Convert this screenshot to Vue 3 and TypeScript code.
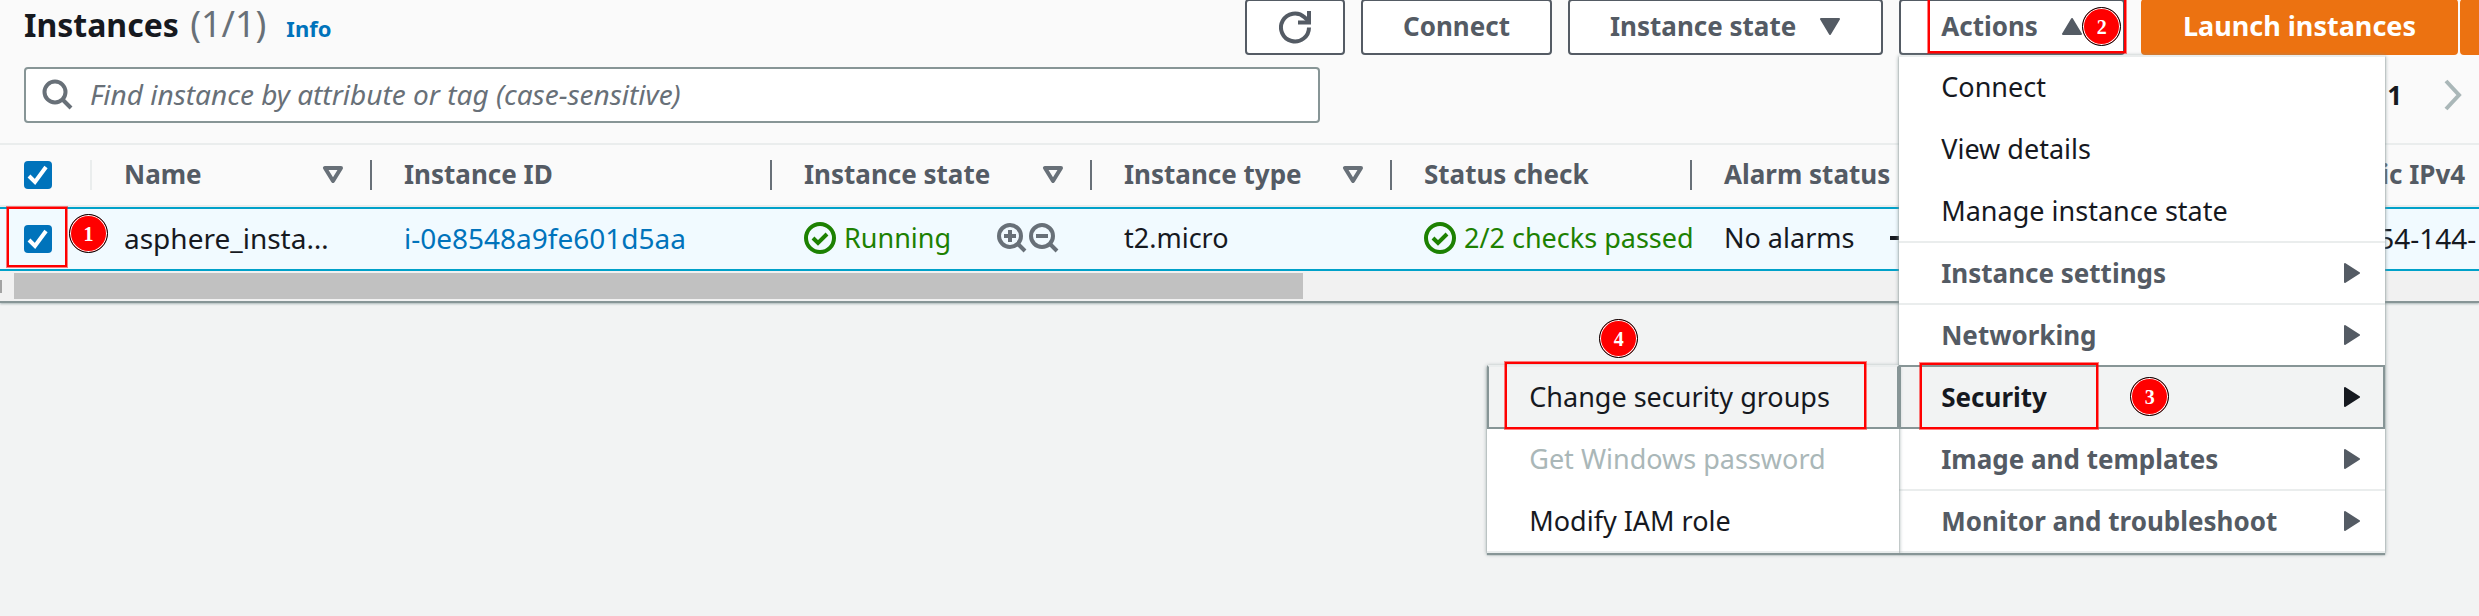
<script setup lang="ts">
import { ref } from 'vue'

interface Column {
  id: string
  label: string
  sortable: boolean
}

interface MenuEntry {
  label: string
  group: boolean
  active?: boolean
}

interface SubEntry {
  label: string
  active?: boolean
  disabled?: boolean
}

const columns: Column[] = [
  { id: 'name', label: 'Name', sortable: true },
  { id: 'iid', label: 'Instance ID', sortable: false },
  { id: 'state', label: 'Instance state', sortable: true },
  { id: 'type', label: 'Instance type', sortable: true },
  { id: 'check', label: 'Status check', sortable: false },
  { id: 'alarm', label: 'Alarm status', sortable: false },
  { id: 'zone', label: '', sortable: false },
  { id: 'dns', label: 'Public IPv4', sortable: false },
]

const menu: MenuEntry[] = [
  { label: 'Connect', group: false },
  { label: 'View details', group: false },
  { label: 'Manage instance state', group: false },
  { label: 'Instance settings', group: true },
  { label: 'Networking', group: true },
  { label: 'Security', group: true, active: true },
  { label: 'Image and templates', group: true },
  { label: 'Monitor and troubleshoot', group: true },
]

const securityMenu: SubEntry[] = [
  { label: 'Change security groups', active: true },
  { label: 'Get Windows password', disabled: true },
  { label: 'Modify IAM role' },
]

const query = ref('')
const allSelected = ref(true)
const rowSelected = ref(true)
</script>

<template>
  <main class="page">
    <section class="panel">
      <header class="toolbar">
        <h1 class="title">Instances <span class="count">(1/1)</span></h1>
        <a class="info" href="#info">Info</a>
        <div class="actions">
          <button class="btn btn-icon" type="button" aria-label="Refresh">
            <svg width="32" height="34" viewBox="0 0 32 34" fill="none" stroke="currentColor" stroke-width="4">
              <path d="M30 17.500A14 14 0 1 1 25.500 7.200L30 11.500" />
              <path d="M30 1V12.500H19" />
            </svg>
          </button>
          <button class="btn" type="button">Connect</button>
          <button class="btn" type="button">
            Instance state
            <svg class="caret" width="22" height="17" viewBox="0 0 22 17"><path d="M2 1H20L11 16Z" /></svg>
          </button>
          <div class="dropdown">
            <button class="btn" type="button" aria-haspopup="menu" aria-expanded="true">
              Actions
              <svg class="caret" width="22" height="17" viewBox="0 0 22 17"><path d="M2 16H20L11 1Z" /></svg>
            </button>
            <span class="frame frame-actions"></span>
            <span class="badge badge-2">2</span>
            <ul class="menu">
              <li v-for="m in menu" :key="m.label" :class="{ group: m.group, active: m.active }">
                <button class="item" type="button">
                  {{ m.label }}
                  <svg v-if="m.group" class="arrow" width="18" height="20" viewBox="0 0 18 20">
                    <path d="M2 1L16 10L2 19Z" />
                  </svg>
                </button>
                <template v-if="m.active">
                  <span class="frame frame-security"></span>
                  <span class="badge badge-3">3</span>
                  <ul class="menu submenu">
                    <li v-for="s in securityMenu" :key="s.label" :class="{ active: s.active }">
                      <button class="item" type="button" :disabled="s.disabled">{{ s.label }}</button>
                      <template v-if="s.active">
                        <span class="frame frame-groups"></span>
                        <span class="badge badge-4">4</span>
                      </template>
                    </li>
                  </ul>
                </template>
              </li>
            </ul>
          </div>
          <div class="split">
            <button class="btn btn-primary" type="button">Launch instances</button>
            <button class="btn btn-primary btn-more" type="button" aria-label="More launch options"></button>
          </div>
        </div>
      </header>

      <div class="filters">
        <label class="search">
          <svg width="32" height="32" viewBox="0 0 32 32" fill="none" stroke="currentColor" stroke-width="4">
            <circle cx="13" cy="13" r="10.500" />
            <path d="M20 20L29 29" />
          </svg>
          <input
            v-model="query"
            type="text"
            aria-label="Find instance"
            placeholder="Find instance by attribute or tag (case-sensitive)"
          />
        </label>
        <nav class="pager" aria-label="Pages">
          <button class="page-no" type="button">1</button>
          <button class="page-next" type="button" aria-label="Next page">
            <svg width="20" height="32" viewBox="0 0 20 32" fill="none" stroke="currentColor" stroke-width="4">
              <path d="M3 2L16 16L3 30" />
            </svg>
          </button>
        </nav>
      </div>

      <div class="table-wrap">
        <table>
          <colgroup>
            <col class="c-check" /><col class="c-name" /><col class="c-id" /><col class="c-state" />
            <col class="c-std" /><col class="c-std" /><col class="c-std" /><col class="c-std" /><col />
          </colgroup>
          <thead>
            <tr>
              <th class="pick">
                <label class="tick">
                  <input v-model="allSelected" type="checkbox" aria-label="Select all instances" />
                  <svg viewBox="0 0 28 28"><path d="M5 15L11 21L22 6" /></svg>
                </label>
              </th>
              <th v-for="c in columns" :key="c.id">
                <div class="head">
                  {{ c.label }}
                  <svg v-if="c.sortable" class="sort" width="22" height="17" viewBox="0 0 22 17">
                    <path d="M3 2H19L11 15Z" />
                  </svg>
                </div>
              </th>
            </tr>
          </thead>
          <tbody>
            <tr>
              <td class="pick">
                <label class="tick">
                  <input v-model="rowSelected" type="checkbox" aria-label="Select asphere instance" />
                  <svg viewBox="0 0 28 28"><path d="M5 15L11 21L22 6" /></svg>
                </label>
                <span class="frame frame-row"></span>
                <span class="badge badge-1">1</span>
              </td>
              <td class="wide">asphere_insta…</td>
              <td class="wide"><a href="#instance">i-0e8548a9fe601d5aa</a></td>
              <td>
                <div class="status">
                  <svg class="ok" width="32" height="32" viewBox="0 0 32 32">
                    <circle cx="16" cy="16" r="14" /><path d="M9 16L14 21L23 12" />
                  </svg>
                  <span>Running</span>
                  <span class="lenses">
                    <button type="button" aria-label="Include in filter">
                      <svg width="30" height="30" viewBox="0 0 30 30">
                        <circle cx="13" cy="13" r="11" /><path d="M21 21L28 28M13 7V19M7 13H19" />
                      </svg>
                    </button>
                    <button type="button" aria-label="Exclude from filter">
                      <svg width="30" height="30" viewBox="0 0 30 30">
                        <circle cx="13" cy="13" r="11" /><path d="M21 21L28 28M7 13H19" />
                      </svg>
                    </button>
                  </span>
                </div>
              </td>
              <td>t2.micro</td>
              <td>
                <div class="status">
                  <svg class="ok" width="32" height="32" viewBox="0 0 32 32">
                    <circle cx="16" cy="16" r="14" /><path d="M9 16L14 21L23 12" />
                  </svg>
                  <span>2/2 checks passed</span>
                </div>
              </td>
              <td>
                <div class="alarm">
                  No alarms
                  <button type="button" aria-label="Add alarm">
                    <svg width="28" height="28" viewBox="0 0 28 28"><path d="M0 14H28M14 0V28" /></svg>
                  </button>
                </div>
              </td>
              <td></td>
              <td class="wide">ec2-54-144-</td>
            </tr>
          </tbody>
        </table>
      </div>
      <div class="scrollbar">
        <span class="nub"></span>
        <span class="thumb"></span>
      </div>
    </section>
  </main>
</template>

<style>
body {
  background: #f2f3f3;
  overflow: hidden;
}
</style>

<style scoped>
.page {
  min-height: 100vh;
  overflow: hidden;
  color: #16191f;
  font: 27px/36px "Noto Sans", "Open Sans", sans-serif;
}
.page *,
.page *::before,
.page *::after {
  box-sizing: border-box;
}
button,
input {
  margin: 0;
  padding: 0;
  border: 0;
  background: none;
  color: inherit;
  font: inherit;
}
svg {
  display: block;
  flex: none;
}
a {
  color: #0073bb;
  text-decoration: none;
}
.panel {
  background: #fafafa;
  border-bottom: 2px solid #879596;
  box-shadow: 0 1px 2px #aab7b8;
}

/* toolbar */
.toolbar {
  display: flex;
  align-items: flex-start;
  height: 55px;
  padding-left: 24px;
}
.title {
  margin: 0;
  font-size: 32px;
  line-height: 48px;
  font-weight: 700;
}
.count {
  margin-left: 3px;
  color: #687078;
  font-size: 36px;
  font-weight: 400;
}
.info {
  margin-left: 20px;
  font-size: 22px;
  line-height: 56px;
  font-weight: 700;
}
.actions {
  display: flex;
  gap: 16px;
  margin: -1px -36px 0 auto;
}
.btn {
  display: flex;
  align-items: center;
  gap: 23px;
  height: 56px;
  padding: 0 40px 2px;
  border: 2px solid #545b64;
  border-radius: 4px;
  background: #fff;
  color: #545b64;
  font-size: 26px;
  font-weight: 700;
  white-space: nowrap;
}
.btn-icon {
  padding: 0 32px;
}
.caret,
.arrow {
  fill: currentColor;
  stroke: currentColor;
  stroke-width: 2;
  stroke-linejoin: round;
}
.split {
  display: flex;
  gap: 2px;
}
.btn-primary {
  border-color: #ec7211;
  background: #ec7211;
  color: #fff;
  font-size: 27px;
}
.btn-more {
  width: 55px;
  padding: 0;
}

/* actions menu */
.dropdown {
  position: relative;
}
.menu {
  position: absolute;
  z-index: 5;
  top: 100%;
  left: 0;
  width: 486px;
  margin: 0;
  padding: 0;
  list-style: none;
  background: #fff;
  border-bottom: 2px solid #eaeded;
  box-shadow: 0 2px 1px #879596, 0 1px 4px #879596;
}
.menu li {
  position: relative;
  height: 62px;
}
.item {
  display: flex;
  align-items: center;
  justify-content: space-between;
  width: 100%;
  height: 62px;
  padding: 0 24px 0 42px;
  border-top: 2px solid transparent;
  text-align: left;
  white-space: nowrap;
}
.item:disabled {
  color: #aab7b8;
}
.menu > li:first-child > .item {
  border-top-color: #eaeded;
}
.group > .item {
  border-top-color: #eaeded;
  color: #545b64;
  font-size: 26px;
  font-weight: 700;
}
.menu > .active > .item {
  height: 64px;
  border: 2px solid #879596;
  padding-right: 22px;
  padding-left: 40px;
  background: #f2f3f3;
  color: #16191f;
}
.active + .group > .item {
  border-top-color: transparent;
}
.submenu {
  top: 0;
  right: 100%;
  left: auto;
  width: 412px;
}

/* filter row */
.filters {
  display: flex;
  align-items: center;
  justify-content: space-between;
  padding: 12px 16px 20px 24px;
}
.search {
  display: flex;
  align-items: center;
  gap: 16px;
  width: 1296px;
  height: 56px;
  padding: 0 16px;
  border: 2px solid #879596;
  border-radius: 4px;
  background: #fff;
  color: #687078;
}
.search input {
  flex: 1;
  height: 48px;
  padding-bottom: 2px;
  outline: 0;
  font-size: 28px;
}
.search input::placeholder {
  color: #687078;
  font-style: italic;
  opacity: 1;
}
.pager {
  display: flex;
  align-items: center;
  gap: 41px;
}
.page-no {
  font-size: 26px;
  font-weight: 700;
}
.page-next {
  color: #aab7b8;
}

/* table */
.table-wrap {
  border-top: 2px solid #eaeded;
  overflow: hidden;
}
table {
  width: 100%;
  table-layout: fixed;
  border-collapse: separate;
  border-spacing: 0;
}
.c-check {
  width: 92px;
}
.c-name {
  width: 280px;
}
.c-id {
  width: 400px;
}
.c-state {
  width: 320px;
}
.c-std {
  width: 300px;
}
th,
td {
  position: relative;
  padding: 0 0 2px 32px;
  text-align: left;
  white-space: nowrap;
}
th {
  height: 62px;
  border-bottom: 2px solid #eaeded;
  color: #545b64;
  font-size: 26px;
  font-weight: 700;
}
th::after {
  content: "";
  position: absolute;
  top: 15px;
  right: 0;
  width: 2px;
  height: 30px;
  background: #687078;
}
th.pick::after {
  background: #eaeded;
}
th:last-child::after {
  content: none;
}
td {
  height: 64px;
  border-top: 2px solid #00a1c9;
  border-bottom: 2px solid #00a1c9;
  background: #f1faff;
}
.wide {
  font-size: 28px;
}
.pick {
  padding: 0 0 0 24px;
}
td.pick {
  z-index: 1;
}
.head {
  display: flex;
  align-items: center;
  justify-content: space-between;
  padding-right: 28px;
}
.sort {
  fill: none;
  stroke: #687078;
  stroke-width: 4;
  stroke-linejoin: round;
}
.tick {
  display: block;
  position: relative;
  width: 28px;
  height: 28px;
}
.tick input {
  display: block;
  width: 28px;
  height: 28px;
  appearance: none;
  border-radius: 4px;
  background: #0073bb;
}
.tick svg {
  position: absolute;
  inset: 0;
  fill: none;
  stroke: #fff;
  stroke-width: 4;
  pointer-events: none;
}
.status {
  display: flex;
  align-items: center;
  gap: 8px;
  color: #1d8102;
}
.ok {
  fill: none;
  stroke: #1d8102;
  stroke-width: 4;
}
.lenses {
  display: flex;
  gap: 2px;
  margin-right: 33px;
  margin-left: auto;
  color: #687078;
}
.lenses svg {
  fill: none;
  stroke: currentColor;
  stroke-width: 4;
}
.alarm {
  display: flex;
  align-items: center;
  justify-content: space-between;
  padding-right: 74px;
}
.alarm svg {
  stroke: #16191f;
  stroke-width: 4;
}

/* horizontal scrollbar */
.scrollbar {
  display: flex;
  align-items: center;
  height: 30px;
  background: #f1f1f1;
}
.nub {
  width: 2px;
  height: 13px;
  margin-right: 12px;
  background: #a3a3a3;
}
.thumb {
  width: 52%;
  height: 26px;
  background: #c1c1c1;
}

/* step markers */
.frame {
  position: absolute;
  z-index: 7;
  border: 2px solid #f00;
  outline: 1px solid #ff000080;
  pointer-events: none;
}
.badge {
  position: absolute;
  z-index: 8;
  display: flex;
  align-items: center;
  justify-content: center;
  width: 39px;
  height: 39px;
  border: 1px solid #000;
  border-radius: 50%;
  background: #f00;
  box-shadow: inset 0 0 0 1px #fff;
  color: #fff;
  font: 700 20px/20px "Liberation Serif", serif;
  pointer-events: none;
}
.frame-row {
  top: -2px;
  left: 7px;
  width: 60px;
  height: 60px;
}
.badge-1 {
  top: 5px;
  left: 69px;
}
.frame-actions {
  top: -1px;
  left: 29px;
  width: 198px;
  height: 55px;
}
.badge-2 {
  top: 8px;
  left: 183px;
}
.frame-security {
  top: -2px;
  left: 21px;
  width: 178px;
  height: 66px;
}
.badge-3 {
  top: 12px;
  left: 231px;
}
.frame-groups {
  top: -3px;
  left: 18px;
  width: 361px;
  height: 67px;
}
.badge-4 {
  top: -46px;
  left: 112px;
}
</style>
